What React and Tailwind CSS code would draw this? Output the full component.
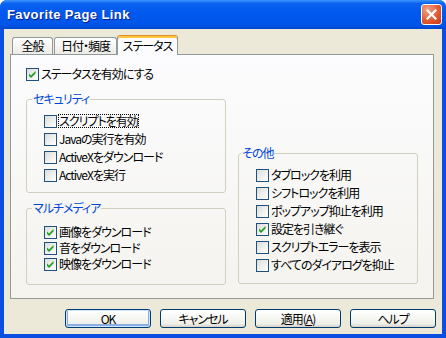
import React from "react";

const FONT = "font-['Noto_Sans_CJK_JP',sans-serif] [font-feature-settings:'palt']";

const security = [
  { label: "スクリプトを有効", focus: true },
  { label: "Javaの実行を有効" },
  { label: "ActiveXをダウンロード" },
  { label: "ActiveXを実行" },
];

const media = [
  { label: "画像をダウンロード", checked: true },
  { label: "音をダウンロード", checked: true },
  { label: "映像をダウンロード", checked: true },
];

const others = [
  { label: "タブロックを利用" },
  { label: "シフトロックを利用" },
  { label: "ポップアップ抑止を利用" },
  { label: "設定を引き継ぐ", checked: true },
  { label: "スクリプトエラーを表示" },
  { label: "すべてのダイアログを抑止" },
];

function Box({ checked }) {
  return (
    <span className="w-[13px] h-[13px] shrink-0 border border-[#1C5180] bg-[linear-gradient(135deg,#DCDCD7,#FFFFFF)] flex items-center justify-center">
      {checked && (
        <svg width="11" height="11" viewBox="0 0 11 11">
          <path d="M2 4.5 L4 6.5 L8.5 2 L8.5 4.5 L4 9 L2 7 Z" fill="#21A121" />
        </svg>
      )}
    </span>
  );
}

function Check({ label, checked, focus, row = "h-[18px]" }) {
  return (
    <div className={`flex items-center gap-[1px] ${row}`}>
      <Box checked={checked} />
      <span
        className={`px-[1px] leading-[14px] ${focus ? "outline outline-1 outline-dotted outline-black -outline-offset-1" : ""}`}
      >
        {label}
      </span>
    </div>
  );
}

function Group({ title, legend = "ml-[5px]", body, children }) {
  return (
    <fieldset className="border border-[#D0D0BF] rounded-[3px] m-0 p-0">
      <legend className={`px-[1px] leading-[14px] text-[#0046D5] ${legend}`}>{title}</legend>
      <div className={body}>{children}</div>
    </fieldset>
  );
}

function Button({ children, primary }) {
  return (
    <button
      className={`w-[86px] h-[19px] rounded-[3px] border border-[#003C74] bg-[linear-gradient(to_bottom,#FFFFFF,#F0F0EA_80%,#D6D0C5)] text-[12px] leading-[14px] text-black flex items-center justify-center ${
        primary ? "shadow-[inset_0_0_0_1px_#CEE7FF,inset_0_-1px_0_2px_#89ADE4]" : ""
      }`}
    >
      {children}
    </button>
  );
}

export default function App() {
  return (
    <div className={`w-[446px] h-[338px] flex flex-col bg-[#0B4FE0] rounded-t-[7px] overflow-hidden text-[12px] tracking-[-1px] text-black ${FONT}`}>
      {/* title bar */}
      <div className="h-[29px] shrink-0 flex items-center justify-between bg-[linear-gradient(to_bottom,#3D95FF_0%,#0A63F0_12%,#0058EE_45%,#0055E8_85%,#0048D0_100%)]">
        <span className="pl-[7px] pt-[1px] font-['Liberation_Sans',sans-serif] font-bold text-[13px] tracking-[0.4px] text-white [text-shadow:1px_1px_0_#0A1E8A]">
          Favorite Page Link
        </span>
        <span className="mr-[4px] w-[21px] h-[21px] rounded-[3px] border border-white bg-[radial-gradient(circle_at_30%_25%,#F3A28A,#E25B33_55%,#C1391A)] flex items-center justify-center">
          <svg width="11" height="11" viewBox="0 0 11 11">
            <path d="M1.5 1.5 L9.5 9.5 M9.5 1.5 L1.5 9.5" stroke="#FFFFFF" strokeWidth="2.2" strokeLinecap="square" />
          </svg>
        </span>
      </div>

      {/* body */}
      <div className="flex-1 mx-[4px] mb-[4px] bg-[#ECE9D8] px-[6px] pt-[6px] flex flex-col">
        {/* tabs */}
        <div className="flex items-end pl-[2px] h-[19px]">
          <div className="w-[41px] h-[17px] border border-b-0 border-[#919B9C] rounded-t-[3px] bg-[linear-gradient(to_bottom,#FFFFFF,#ECEBE6)] flex items-center justify-center leading-[14px]">
            全般
          </div>
          <div className="ml-[1px] w-[63px] h-[17px] border border-b-0 border-[#919B9C] rounded-t-[3px] bg-[linear-gradient(to_bottom,#FFFFFF,#ECEBE6)] flex items-center justify-center leading-[14px]">
            日付・頻度
          </div>
          <div className="relative z-10 -mb-px w-[61px] h-[20px] border-x border-t border-x-[#919B9C] border-t-[#E68B2C] rounded-t-[3px] bg-[#FCFCFE] shadow-[inset_0_2px_0_#FFC83C] flex items-center justify-center pt-[1px] leading-[14px]">
            ステータス
          </div>
        </div>

        {/* panel */}
        <div className="w-[424px] h-[245px] border border-[#919B9C] bg-[linear-gradient(to_bottom,#FCFCFE,#F4F3EE)] pl-[15px] pt-[10px]">
          <Check label="ステータスを有効にする" checked />

          <div className="flex gap-[12px] mt-[9px]">
            <div className="w-[200px] flex flex-col gap-[8px]">
              <Group title="セキュリティ" body="pl-[17px] pt-[6px] pb-[8px]">
                {security.map((c) => (
                  <Check key={c.label} {...c} />
                ))}
              </Group>
              <Group title="マルチメディア" body="pl-[17px] pt-[9px] pb-[12px]">
                {media.map((c) => (
                  <Check key={c.label} {...c} row="h-[16px]" />
                ))}
              </Group>
            </div>
            <div className="w-[180px] mt-[54px]">
              <Group title="その他" legend="ml-[2px]" body="pl-[17px] pt-[6px] pb-[9px]">
                {others.map((c) => (
                  <Check key={c.label} {...c} />
                ))}
              </Group>
            </div>
          </div>
        </div>

        {/* buttons */}
        <div className="flex justify-end gap-[9px] mt-[10px]">
          <Button primary>OK</Button>
          <Button>キャンセル</Button>
          <Button>
            適用(<span className="underline">A</span>)
          </Button>
          <Button>ヘルプ</Button>
        </div>
      </div>
    </div>
  );
}
